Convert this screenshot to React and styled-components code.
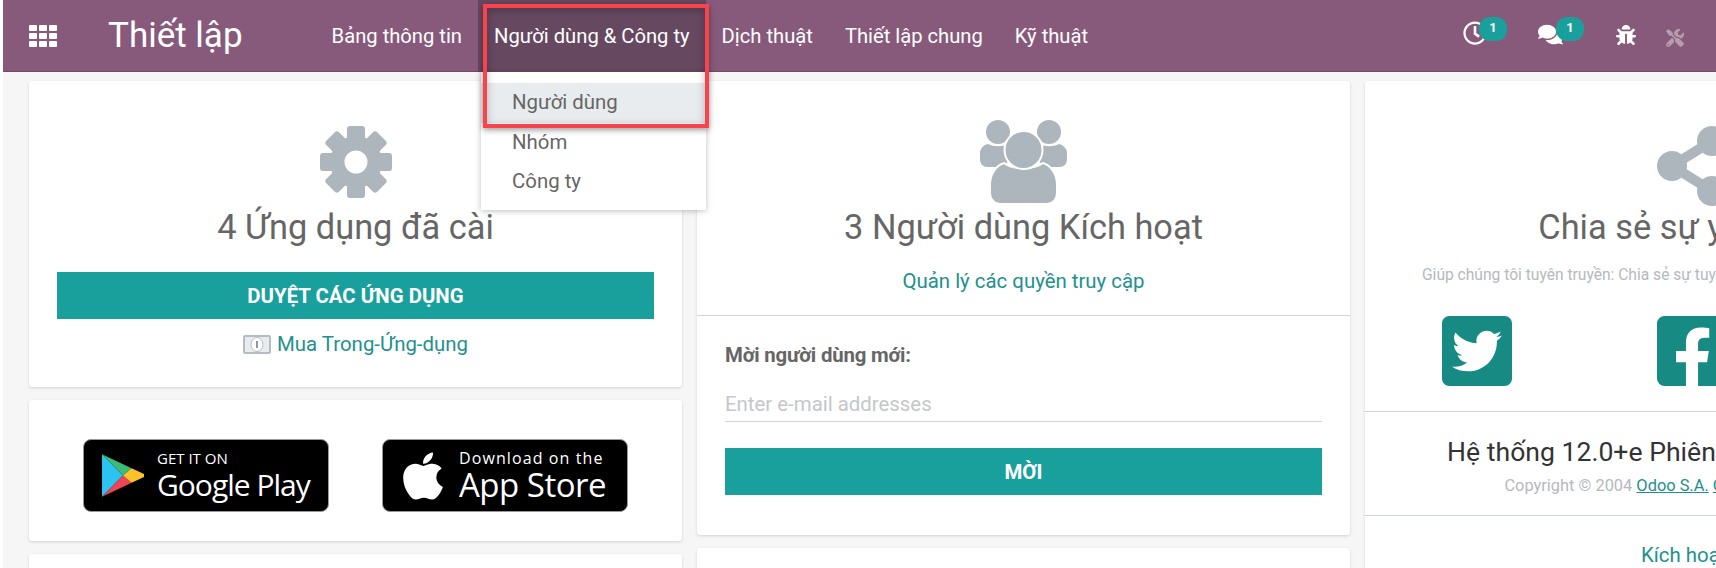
import React from 'react';
import styled, { createGlobalStyle } from 'styled-components';
import {
  FaRegClock,
  FaComments,
  FaBug,
  FaTools,
  FaShareAlt,
  FaTwitterSquare,
  FaFacebookSquare,
  FaLinkedin,
  FaApple,
} from 'react-icons/fa';

const menus = ['Bảng thông tin', 'Người dùng & Công ty', 'Dịch thuật', 'Thiết lập chung', 'Kỹ thuật'];
const subMenus = ['Người dùng', 'Nhóm', 'Công ty'];

const GearIcon = () => (
  <svg width="72" height="72" viewBox="0 0 72 72" fill="#adb5bd">
    {[0, 45, 90, 135, 180, 225, 270, 315].map((deg) => (
      <rect key={deg} x="27" y="0" width="18" height="20" rx="3" transform={`rotate(${deg} 36 36)`} />
    ))}
    <path fillRule="evenodd" d="M36 10a26 26 0 1 0 0 52a26 26 0 1 0 0-52zM36 24.500a11.500 11.500 0 1 1 0 23a11.500 11.500 0 1 1 0-23z" />
  </svg>
);

const UsersIcon = () => (
  <svg width="87" height="83" viewBox="0 0 87 83" fill="#adb5bd">
    <circle cx="18" cy="12" r="12" />
    <circle cx="69" cy="12" r="12" />
    <path d="M8 24c6 3 14 3 20 0l6 8l-10 15H8c-5 0-8-3-8-8V33c0-4 3-8 8-9z" />
    <path d="M79 24c-6 3-14 3-20 0l-6 8l10 15h16c5 0 8-3 8-8V33c0-4-3-8-8-9z" />
    <path stroke="#fff" strokeWidth="2" d="M24 43c9 7 30 7 39 0c9 3 14 12 14 22v8c0 6-4 11-10 11H20c-6 0-10-5-10-11v-8c0-10 5-19 14-22z" />
    <circle cx="43.500" cy="30" r="19" stroke="#fff" strokeWidth="2" />
  </svg>
);

const MoneyIcon = () => (
  <svg width="28" height="19" viewBox="0 0 28 19">
    <rect x="1" y="1" width="26" height="17" rx="1" fill="#e9ecef" stroke="#b4bcc4" strokeWidth="2" />
    <ellipse cx="14" cy="9.500" rx="6" ry="7" fill="#fff" stroke="#b4bcc4" />
    <rect x="13" y="6" width="2" height="7" fill="#8f9aa5" />
  </svg>
);

const PlayIcon = () => (
  <svg width="42" height="47" viewBox="0 0 44 64" preserveAspectRatio="none">
    <path d="M0 3v58l22-29z" fill="#2bc3f0" />
    <path d="M0 3l31 19l-9 10z" fill="#3dbb78" />
    <path d="M0 61l31-19l-9-10z" fill="#ee4456" />
    <path d="M31 22l13 8c1.500 1 1.500 3 0 4l-13 8l-9-10z" fill="#fdc129" />
  </svg>
);

const App = () => (
  <Page>
    <GlobalStyle />
    <TopBar>
      <AppsGrid>
        {Array.from({ length: 9 }).map((_, i) => (
          <span key={i} />
        ))}
      </AppsGrid>
      <AppTitle>Thiết lập</AppTitle>
      <NavMenu>
        {menus.map((menu, i) => (
          <NavItem key={menu} $active={i === 1}>
            {menu}
            {i === 1 && (
              <>
                <Dropdown>
                  {subMenus.map((sub, j) => (
                    <DropdownItem key={sub} $active={j === 0}>{sub}</DropdownItem>
                  ))}
                </Dropdown>
                <Highlight />
              </>
            )}
          </NavItem>
        ))}
      </NavMenu>
      <Systray>
        <TrayIcon $width={75} $shift={-6}>
          <FaRegClock size={24} />
          <Badge $left={16}>1</Badge>
        </TrayIcon>
        <TrayIcon $width={78} $shift={-4}>
          <FaComments size={25} />
          <Badge $left={18}>1</Badge>
        </TrayIcon>
        <TrayIcon $width={50} $shift={-3}>
          <FaBug size={20} />
        </TrayIcon>
        <TrayIcon $width={50} $shift={3} $muted>
          <FaTools size={18} />
        </TrayIcon>
      </Systray>
    </TopBar>

    <Dashboard>
      <Column>
        <Card $height={306}>
          <CardHead>
            <IconSlot><GearIcon /></IconSlot>
            <Heading>4 Ứng dụng đã cài</Heading>
            <FullButton $wide>DUYỆT CÁC ỨNG DỤNG</FullButton>
            <IconLink>
              <MoneyIcon />
              <TealLink>Mua Trong-Ứng-dụng</TealLink>
            </IconLink>
          </CardHead>
        </Card>
        <Card $height={141}>
          <StoreRow>
            <StoreBadge $left={18} $gap={13}>
              <PlayIcon />
              <StoreText>
                <StoreSmall $size={15}>GET IT ON</StoreSmall>
                <StoreBig $size={30} $spacing={-1}>Google Play</StoreBig>
              </StoreText>
            </StoreBadge>
            <StoreBadge $left={13} $gap={9}>
              <FaApple size={54} />
              <StoreText>
                <StoreSmall $size={16} $spacing={1.1}>Download on the</StoreSmall>
                <StoreBig $size={33} $spacing={-0.5}>App Store</StoreBig>
              </StoreText>
            </StoreBadge>
          </StoreRow>
        </Card>
        <Card $height={200} />
      </Column>

      <Column>
        <Card $height={454}>
          <CardHead $height={234}>
            <IconSlot $top={39}><UsersIcon /></IconSlot>
            <Heading $top={3}>3 Người dùng Kích hoạt</Heading>
            <TealLink $block>Quản lý các quyền truy cập</TealLink>
          </CardHead>
          <InviteForm>
            <InviteLabel>Mời người dùng mới:</InviteLabel>
            <EmailInput placeholder="Enter e-mail addresses" />
            <FullButton>MỜI</FullButton>
          </InviteForm>
        </Card>
        <Card $height={200} />
      </Column>

      <Column>
        <Card $height={600}>
          <CardHead $height={330}>
            <IconSlot $top={45}><FaShareAlt size={80} color="#adb5bd" /></IconSlot>
            <Heading $top={0}>Chia sẻ sự yêu thích</Heading>
            <ShareNote>Giúp chúng tôi tuyên truyền: Chia sẻ sự tuyệt vời của Odoo với bạn bè của bạn!</ShareNote>
            <SocialRow>
              <FaTwitterSquare />
              <FaFacebookSquare />
              <FaLinkedin />
            </SocialRow>
          </CardHead>
          <VersionBlock>
            <VersionTitle>Hệ thống 12.0+e Phiên bản Doanh nghiệp</VersionTitle>
            <Copyright>
              Copyright © 2004 <u>Odoo S.A.</u> <u>GNU LGPL Licensed</u>
            </Copyright>
          </VersionBlock>
          <DevLink>Kích hoạt chế độ</DevLink>
        </Card>
      </Column>
    </Dashboard>
  </Page>
);

export default App;

const GlobalStyle = createGlobalStyle`
  html, body {
    margin: 0;
    padding: 0;
    background: #fff;
    overflow: hidden;
  }
  * {
    box-sizing: border-box;
  }
`;

const Page = styled.div`
  margin-left: 3px;
  height: 568px;
  overflow: hidden;
  background: #f6f6f6;
  font-family: Roboto, 'Liberation Sans', sans-serif;
`;

const TopBar = styled.header`
  position: relative;
  z-index: 2;
  display: flex;
  align-items: center;
  height: 72px;
  padding-left: 26px;
  background: #875a7b;
  box-shadow: inset 0 -1px 0 #6f4a66;
`;

const AppsGrid = styled.div`
  display: grid;
  grid-template-columns: repeat(3, 8px);
  grid-auto-rows: 6px;
  gap: 2px;

  span {
    background: #fff;
    border-radius: 1px;
  }
`;

const AppTitle = styled.div`
  margin-left: 51px;
  color: #fff;
  font-size: 35px;
  line-height: 72px;
`;

const NavMenu = styled.nav`
  display: flex;
  margin-left: 73px;
`;

const NavItem = styled.div`
  position: relative;
  padding: 0 16px;
  color: #fff;
  font-size: 20.2px;
  line-height: 72px;
  background: ${(p) => (p.$active ? '#664860' : 'transparent')};
`;

const Dropdown = styled.div`
  position: absolute;
  top: 72px;
  left: 3px;
  width: 225px;
  height: 138px;
  padding-top: 11px;
  background: #fff;
  box-shadow: 0 1px 6px rgba(0, 0, 0, 0.25);
`;

const DropdownItem = styled.div`
  height: 39.5px;
  padding-left: 31px;
  color: #666;
  font-size: 20.4px;
  line-height: 39.5px;
  background: ${(p) => (p.$active ? '#e9ecef' : 'transparent')};
`;

const Highlight = styled.div`
  position: absolute;
  top: 4px;
  left: 5px;
  width: 226px;
  height: 124px;
  border: 4px solid #f9434c;
  box-shadow: 0 2px 6px rgba(0, 0, 0, 0.4), inset 0 2px 8px rgba(0, 0, 0, 0.25);
  pointer-events: none;
`;

const Systray = styled.div`
  display: flex;
  align-items: center;
  margin-left: auto;
  height: 72px;
`;

const TrayIcon = styled.div`
  position: relative;
  display: flex;
  align-items: center;
  width: ${(p) => p.$width}px;
  height: 72px;
  color: ${(p) => (p.$muted ? 'rgba(255, 255, 255, 0.4)' : '#fff')};

  svg {
    margin-top: ${(p) => p.$shift}px;
  }
`;

const Badge = styled.span`
  position: absolute;
  top: 17px;
  left: ${(p) => p.$left}px;
  width: 28px;
  height: 24px;
  border-radius: 11px;
  background: #1aa09c;
  color: #fff;
  font-size: 13px;
  font-weight: 700;
  line-height: 22px;
  text-align: center;
`;

const Dashboard = styled.main`
  display: flex;
  gap: 15px;
  padding: 9px 0 0 26px;
  width: 2100px;
`;

const Column = styled.section`
  display: flex;
  flex-direction: column;
  gap: 13px;
  width: 653px;
  flex: none;
`;

const Card = styled.div`
  flex: none;
  height: ${(p) => p.$height}px;
  background: #fff;
  border-radius: 3px;
  box-shadow: 0 1px 3px rgba(0, 0, 0, 0.15);
`;

const CardHead = styled.div`
  display: flex;
  flex-direction: column;
  align-items: center;
  height: ${(p) => (p.$height ? `${p.$height}px` : 'auto')};
  padding: 0 28px;
  text-align: center;
`;

const IconSlot = styled.div`
  display: flex;
  margin-top: ${(p) => p.$top ?? 45}px;
  line-height: 0;
`;

const Heading = styled.h2`
  margin: ${(p) => p.$top ?? 8}px 0 0;
  color: #666;
  font-size: 34.4px;
  font-weight: 400;
  line-height: 42px;
  white-space: nowrap;
`;

const FullButton = styled.div`
  width: 100%;
  height: 47px;
  margin-top: ${(p) => (p.$wide ? '24px' : '0')};
  background: #1aa09c;
  color: #fff;
  font-size: 20.4px;
  font-weight: 700;
  line-height: 49px;
  text-align: center;
`;

const IconLink = styled.div`
  display: flex;
  align-items: center;
  gap: 6px;
  margin-top: 13px;
`;

const TealLink = styled.span`
  display: ${(p) => (p.$block ? 'block' : 'inline')};
  margin-top: ${(p) => (p.$block ? '21px' : '0')};
  color: #21918c;
  font-size: 20.4px;
  line-height: 24px;
`;

const StoreRow = styled.div`
  display: flex;
  gap: 53px;
  padding: 39px 0 0 54px;
`;

const StoreBadge = styled.div`
  display: flex;
  align-items: center;
  gap: ${(p) => p.$gap}px;
  width: 246px;
  height: 73px;
  padding-left: ${(p) => p.$left}px;
  background: #000;
  border: 1px solid #999;
  border-radius: 8px;
  color: #fff;
`;

const StoreText = styled.div`
  display: flex;
  flex-direction: column;
`;

const StoreSmall = styled.span`
  font-family: 'Open Sans', sans-serif;
  font-size: ${(p) => p.$size}px;
  letter-spacing: ${(p) => p.$spacing ?? 0}px;
  line-height: 18px;
  white-space: nowrap;
`;

const StoreBig = styled.span`
  font-family: 'Open Sans', sans-serif;
  font-size: ${(p) => p.$size}px;
  letter-spacing: ${(p) => p.$spacing}px;
  line-height: 36px;
  white-space: nowrap;
`;

const InviteForm = styled.div`
  padding: 27px 28px 0;
  border-top: 1px solid #ced4da;
`;

const InviteLabel = styled.div`
  color: #666;
  font-size: 20.4px;
  font-weight: 700;
  line-height: 24px;
  letter-spacing: -0.2px;
`;

const EmailInput = styled.input`
  display: block;
  width: 100%;
  height: 38px;
  margin: 17px 0 26px;
  padding: 2px 0 0;
  border: 0;
  border-bottom: 1px solid #ced4da;
  outline: none;
  font-family: inherit;
  font-size: 20.4px;

  &::placeholder {
    color: #c4c7ca;
  }
`;

const ShareNote = styled.p`
  margin: 17px 0 0;
  color: #b5b9bd;
  font-size: 15.6px;
  line-height: 20px;
  white-space: nowrap;
`;

const SocialRow = styled.div`
  display: flex;
  justify-content: center;
  gap: 135px;
  margin-top: 26px;
  color: #178a84;
  font-size: 80px;
  line-height: 0;
`;

const VersionBlock = styled.div`
  height: 105px;
  padding-top: 25px;
  border-top: 1px solid #ced4da;
  border-bottom: 1px solid #ced4da;
  text-align: center;
  white-space: nowrap;
`;

const VersionTitle = styled.div`
  color: #333;
  font-size: 26.6px;
  line-height: 30px;
`;

const Copyright = styled.div`
  margin-top: 9px;
  padding-right: 20px;
  color: #b5b9bd;
  font-size: 16.4px;
  line-height: 20px;

  u {
    color: #21918c;
  }
`;

const DevLink = styled.div`
  margin-top: 27px;
  padding-left: 276px;
  color: #21918c;
  font-size: 20.4px;
  line-height: 24px;
  white-space: nowrap;
`;
